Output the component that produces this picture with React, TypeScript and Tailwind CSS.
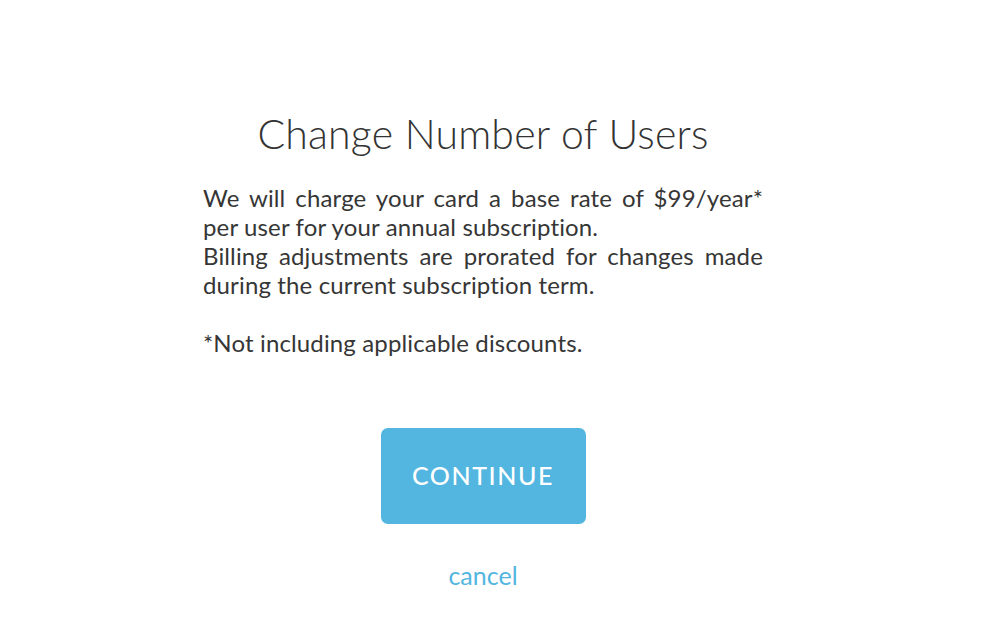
export default function App() {
  return (
    <div
      className="min-h-screen w-full bg-white pr-[15px] flex flex-col items-center text-[#333333] [font-variant-ligatures:none]"
      style={{ fontFamily: "Lato, 'Open Sans', sans-serif" }}
    >
      <h1 className="mt-[108px] text-[41px] leading-[52px] font-light text-[#333333] tracking-[0.2px]">
        Change Number of Users
      </h1>
      <div className="mt-[23px] w-[560px] text-[24px] leading-[29px] tracking-[0.14px] text-justify text-[#363636]">
        <p>We will charge your card a base rate of $99/year* per user for your annual subscription.</p>
        <p>Billing adjustments are prorated for changes made during the current subscription term.</p>
        <p className="mt-[29px]">*Not including applicable discounts.</p>
      </div>
      <button className="mt-[71px] w-[205px] h-[96px] rounded-[7px] bg-[#53b6e0] text-white text-[25px] tracking-[1.6px] font-medium">
        CONTINUE
      </button>
      <a href="#" className="mt-[35px] text-[25px] leading-[32px] text-[#53b6e0]">
        cancel
      </a>
    </div>
  );
}
